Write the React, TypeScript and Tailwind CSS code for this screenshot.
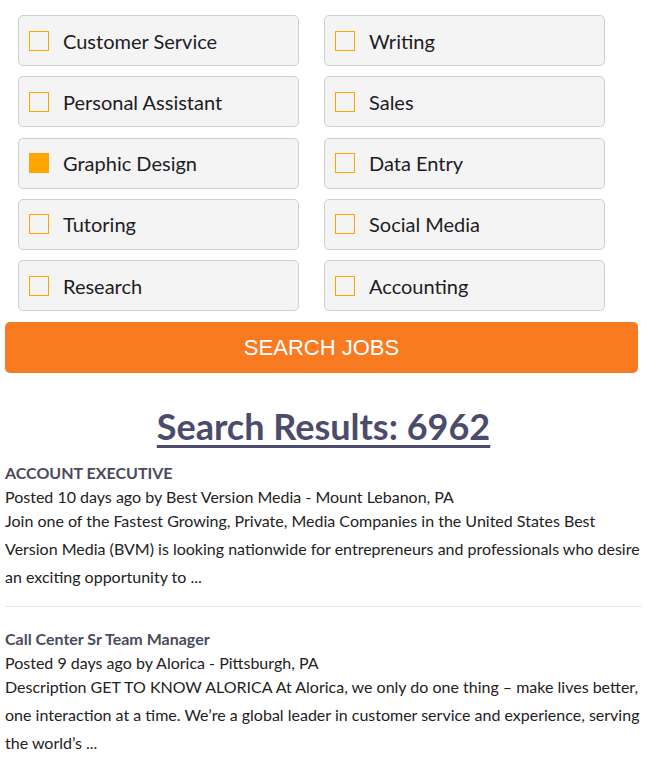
const CATEGORIES = [
  { label: 'Customer Service', checked: false },
  { label: 'Writing', checked: false },
  { label: 'Personal Assistant', checked: false },
  { label: 'Sales', checked: false },
  { label: 'Graphic Design', checked: true },
  { label: 'Data Entry', checked: false },
  { label: 'Tutoring', checked: false },
  { label: 'Social Media', checked: false },
  { label: 'Research', checked: false },
  { label: 'Accounting', checked: false },
]

const JOBS = [
  {
    title: 'ACCOUNT EXECUTIVE',
    posted: 'Posted 10 days ago by Best Version Media - Mount Lebanon, PA',
    desc: 'Join one of the Fastest Growing, Private, Media Companies in the United States Best Version Media (BVM) is looking nationwide for entrepreneurs and professionals who desire an exciting opportunity to ...',
  },
  {
    title: 'Call Center Sr Team Manager',
    posted: 'Posted 9 days ago by Alorica - Pittsburgh, PA',
    desc: 'Description GET TO KNOW ALORICA At Alorica, we only do one thing \u2013 make lives better, one interaction at a time. We\u2019re a global leader in customer service and experience, serving the world\u2019s ...',
  },
]

export default function App() {
  return (
    <div className="min-h-screen bg-white font-['Lato','Liberation_Sans',sans-serif] px-[5px] pt-[15px]">
      <div className="grid grid-cols-[281px_281px] gap-x-[25px] gap-y-[10.25px] pl-[13px]">
        {CATEGORIES.map(c => (
          <label
            key={c.label}
            className="h-[51px] flex items-center bg-[#f4f4f4] border border-[#cfcfcf] rounded-[5px] pl-[10px] cursor-pointer"
          >
            <span
              className={`w-[20px] h-[20px] border border-[#ffa500] shrink-0 ${c.checked ? 'bg-[#ffa500]' : 'bg-transparent'}`}
            />
            <span className="ml-[14px] text-[20px] text-[#1c1c24] leading-none">{c.label}</span>
          </label>
        ))}
      </div>

      <button className="mt-[11px] w-[633px] h-[51px] bg-[#f87b21] rounded-[5px] text-white text-[22px] font-['Liberation_Sans',Arial,sans-serif]">
        SEARCH JOBS
      </button>

      <h2 className="mt-[31px] text-center text-[36px] leading-[44px] font-bold text-[#4b4b6b] underline underline-offset-[5px] decoration-[3px]">
        Search Results: 6962
      </h2>

      <div className="mt-[13px]">
        {JOBS.map((j, i) => (
          <div key={j.title} className={i > 0 ? 'border-t border-[#e6e6e6] pt-[20px]' : ''}>
            <div className="text-[16px] leading-[24px] font-bold text-[#4a4a5e]">{j.title}</div>
            <div className="text-[16px] leading-[24px] text-[#222]">{j.posted}</div>
            <p className="-mt-[2px] text-[16px] leading-[28px] text-[#222] pb-[15px]">{j.desc}</p>
          </div>
        ))}
      </div>
    </div>
  )
}
